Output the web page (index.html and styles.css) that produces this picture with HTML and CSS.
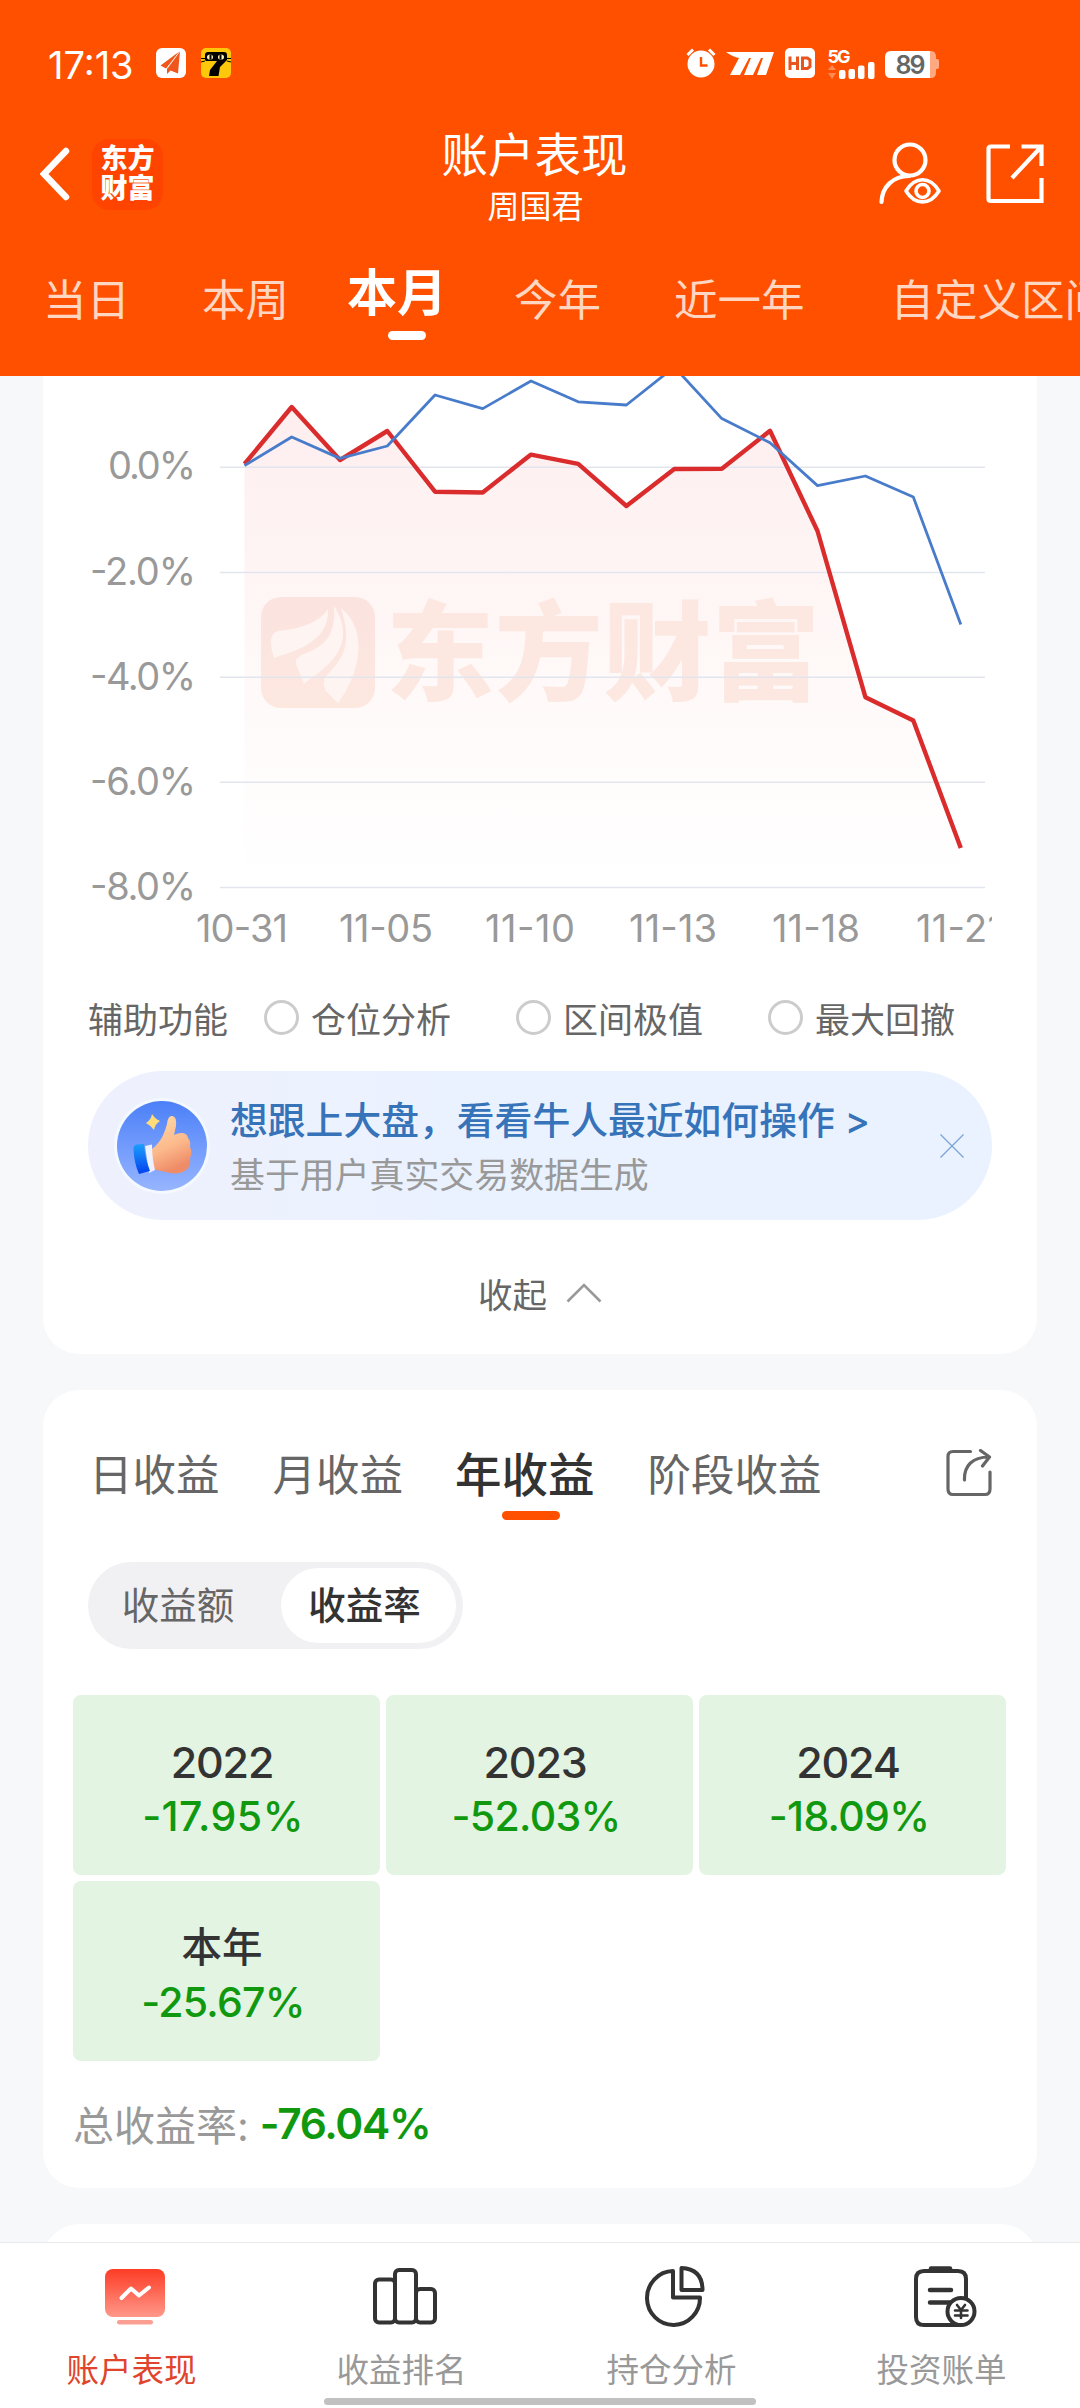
FILE: index.html
```html
<!DOCTYPE html>
<html lang="zh-CN">
<head>
<meta charset="utf-8">
<title>账户表现</title>
<link rel="stylesheet" href="styles.css">
</head>
<body>
<div class="app">
  <header class="header">
    <div class="status">
      <span class="time">17:13</span>
      <svg class="st-plane" width="30" height="30" viewBox="0 0 30 30"><rect width="30" height="30" rx="6" fill="#fff"/><path d="M24 3 4.500 17.500 10 20.500ZM24 3 11 20.500V26L14.500 22.500 22 25.500Z" fill="#f0561c"/><path d="M24 3 11 20.500" stroke="#fff" stroke-width=".8"/></svg>
      <svg class="st-cat" width="30" height="30" viewBox="0 0 30 30"><rect width="30" height="30" rx="5" fill="#fdc70c"/><path d="M4 12V7q0-3 3-3h16q3 0 3 3v5L19 19 17.500 28H8L9 22 16 13H5Z" fill="#000"/><path d="M0 10.500h4M0 14l4-1M30 10.500h-4M30 14l-4-1" stroke="#000"/><ellipse cx="9" cy="9" rx="3" ry="2.600" fill="#fff3b0"/><ellipse cx="20" cy="9" rx="3" ry="2.600" fill="#fff3b0"/><path d="M9.500 6.500v5M19.500 6.500v5" stroke="#000" stroke-width="2"/></svg>
      <span class="spacer"></span>
      <svg class="st-alarm" width="30" height="30" viewBox="0 0 30 30"><circle cx="15" cy="16" r="13.500" fill="#fff"/><path d="M1.500 7 7 1.500M28.500 7 23 1.500" stroke="#fff" stroke-width="3"/><path d="M15 9v8.500h6.500" fill="none" stroke="#ff5000" stroke-width="2.400"/></svg>
      <svg class="st-m" width="48" height="23" viewBox="0 0 48 23"><path d="M0 0H48L40 23H31L37 6H35L27 23H18L25 6H23L14 23H4L13 6Q7 5 0 0Z" fill="#fff"/></svg>
      <svg class="st-hd" width="30" height="30" viewBox="0 0 30 30"><rect width="30" height="30" rx="5" fill="#fff"/><path d="M5 8.500V22M12.500 8.500V22M5 15.500h7.500M17.500 10h5l2.500 2v6.500l-2.500 2h-5Z" fill="none" stroke="#e8551c" stroke-width="3"/></svg>
      <svg class="st-5g" width="48" height="31" viewBox="0 0 48 31"><text x="0.500" y="14.500" class="net" textLength="23">5G</text><path d="M1 22l4-5 4 5ZM1 25h8l-4 6Z" fill="#ff8a55"/><rect x="12" y="22" width="6.500" height="9" rx="2" fill="#fff"/><rect x="21.500" y="21" width="6.500" height="10" rx="2" fill="#fff"/><rect x="31" y="17.500" width="6.500" height="13.500" rx="2" fill="#fff"/><rect x="41" y="14" width="6.500" height="17" rx="2" fill="#fff"/></svg>
      <svg class="st-bat" width="54" height="27" viewBox="0 0 54 27"><path d="M42 0h4q5 0 5 6v2h1.500q1.500 0 1.500 2v6q0 2-1.500 2H51v3q0 6-5 6h-4Z" fill="#ffa983"/><path d="M6 0H45V27H6Q0 27 0 21V6Q0 0 6 0Z" fill="#fff"/><text x="10.500" y="22.500" class="bat" textLength="30">89</text></svg>
    </div>
    <div class="titlebar">
      <svg width="30" height="54" viewBox="0 0 30 54"><path d="M26 4 4 27 26 50" fill="none" stroke="#fff" stroke-width="6.500" stroke-linecap="round"/></svg>
      <div class="logo"><span>东方</span><span>财富</span></div>
      <div class="titles"><h1>账户表现</h1><p>周国君</p></div>
      <svg class="user" width="64" height="64" viewBox="0 0 64 64"><g fill="none" stroke="#fff" stroke-width="4.200" stroke-linecap="round"><circle cx="32" cy="18" r="15.500"/><path d="M3.500 60C4 45 15 34 31 34"/><path d="M28 49C37 34 52 34 61 49C52 63.500 37 63.500 28 49Z" stroke-width="3.600" stroke-linejoin="round"/><circle cx="44.500" cy="49" r="6.500" stroke-width="3.600"/></g></svg>
      <svg class="open" width="58" height="60" viewBox="0 0 58 60"><path d="M24 2.500H5q-2.500 0-2.500 2.500V54.500q0 2.500 2.500 2.500H55.500V34M55.500 22V2.500H35.500M55 3 26 34" fill="none" stroke="#fff" stroke-width="4.200"/></svg>
    </div>
    <nav class="ranges">
      <span>当日</span><span class="g2">本周</span><span class="on">本月<i></i></span><span class="g4">今年</span><span class="g5">近一年</span><span class="g6">自定义区间</span>
    </nav>
  </header>

  <main class="content">
    <section class="card chart-card">
      <svg class="chart" width="904" height="584" viewBox="88 376 904 584">
        <defs><linearGradient id="area" gradientUnits="userSpaceOnUse" x1="0" y1="400" x2="0" y2="880"><stop offset="0" stop-color="#f2454f" stop-opacity=".095"/><stop offset=".6" stop-color="#f75c4a" stop-opacity=".035"/><stop offset="1" stop-color="#f75c4a" stop-opacity="0"/></linearGradient>
        <linearGradient id="wm" x1="0" y1="0" x2="0" y2="1"><stop offset="0" stop-color="#fbe3df"/><stop offset="1" stop-color="#fde8e0"/></linearGradient></defs>
        <path d="M244.500 887V464L291.700 407 340 460 387.300 431 435 491.700 482.700 492.500 531 454.600 578.200 463.800 626.400 506 674.300 469 721.800 468.700 770 430.800 817.500 531 865.400 697.200 913.300 720.500 960.800 848V887Z" fill="url(#area)"/>
        <rect x="261" y="597" width="114" height="111" rx="20" fill="url(#wm)"/>
        <g fill="#fef5f3"><path d="M328 609C320 622 300 629 279 631Q271 632 271 642Q271 650 274 658C290 652 330 644 328 609Z"/><path d="M334 606C336 636 325 646 304 654Q294 658 296 664Q300 674 304 684C318 672 362 650 334 606Z"/><path d="M341 608C351 640 347 655 327 675Q321 682 326 691L338 703C356 680 372 634 341 608Z"/></g>
        <text x="386" y="692" class="watermark" textLength="434">东方财富</text>
        <path d="M220 467.200H985M220 572.400H985M220 677.300H985M220 782.200H985M220 887.400H985" stroke="#e2e5ee" stroke-width="1.500"/>
        <path d="M244.500 464 291.700 407 340 460 387.300 431 435 491.700 482.700 492.500 531 454.600 578.200 463.800 626.400 506 674.300 469 721.800 468.700 770 430.800 817.500 531 865.400 697.200 913.300 720.500 960.800 848" fill="none" stroke="#da2c2c" stroke-width="4.400" stroke-linejoin="round"/>
        <path d="M244.500 465.500 291.700 437 340 458.400 387.300 446 435 395 482.700 408.600 531 381 578.200 401.800 626.400 405 674.300 367 721.800 418.600 770 442.700 817.500 485.600 865.400 476 913.300 497 960.800 624.500" fill="none" stroke="#487ccb" stroke-width="2.800" stroke-linejoin="round"/>
        <g class="axis">
          <text x="108" y="479" textLength="88">0.0%</text><text x="90" y="585" textLength="106">-2.0%</text><text x="90" y="690" textLength="106">-4.0%</text><text x="90" y="795" textLength="106">-6.0%</text><text x="90" y="900" textLength="106">-8.0%</text>
          <text x="196" y="942" textLength="92">10-31</text><text x="339" y="942" textLength="94">11-05</text><text x="485" y="942" textLength="90">11-10</text><text x="629" y="942" textLength="88">11-13</text><text x="772" y="942" textLength="88">11-18</text><text x="916" y="942" textLength="87">11-21</text>
        </g>
      </svg>
      <div class="aux">
        <span class="aux-label">辅助功能</span>
        <label class="opt"><i></i>仓位分析</label><label class="opt o2"><i></i>区间极值</label><label class="opt o3"><i></i>最大回撤</label>
      </div>
      <div class="banner">
        <svg class="thumb" width="96" height="96" viewBox="0 0 96 96"><defs><linearGradient id="tb" x1="0" y1="0" x2="0" y2="1"><stop offset="0" stop-color="#4c80f8"/><stop offset="1" stop-color="#97b5ff"/></linearGradient><linearGradient id="hand" x1="0" y1="0" x2=".3" y2="1"><stop offset="0" stop-color="#ffd9a8"/><stop offset=".6" stop-color="#fcba8c"/><stop offset="1" stop-color="#ef8c68"/></linearGradient><linearGradient id="cuff" x1="0" y1="0" x2="0" y2="1"><stop offset="0" stop-color="#1ba0fb"/><stop offset="1" stop-color="#0340ee"/></linearGradient></defs><circle cx="48" cy="48" r="48" fill="#f4f8ff"/><circle cx="48" cy="48" r="45" fill="url(#tb)"/><path d="M38 51C46 45 50 37 53 26Q54 17 58.500 18Q63 19 62 28L60 37C66 34 73 34 74 40Q77 43 76 49Q79 55 76 60Q77 67 74 70Q69 77 56 75L38 71Z" fill="url(#hand)"/><path d="M31 48 38 46.500Q38 60 41 72L35 75Z" fill="#eef1ff"/><path d="M19.500 51Q19 47 23 46.500L30 46Q31 60 36 73L25 76Q20 65 19.500 51Z" fill="url(#cuff)"/><path d="M38 16Q41 21 46 23Q41 26 40 32Q36 27 32 25Q37 22 38 16Z" fill="#ffdc78"/></svg>
        <div class="banner-text"><strong>想跟上大盘，看看牛人最近如何操作 &gt;</strong><span>基于用户真实交易数据生成</span></div>
        <svg class="close" width="24" height="24" viewBox="0 0 24 24"><path d="M.5.5 23.500 23.500M23.500.5.5 23.500" stroke="#7ba3d5" stroke-width="1.300"/></svg>
      </div>
      <div class="fold">收起<svg width="36" height="20" viewBox="0 0 36 20"><path d="M1.500 18.500 18 2 34.500 18.500" fill="none" stroke="#999" stroke-width="2.600"/></svg></div>
    </section>

    <section class="card income">
      <div class="tabs"><span>日收益</span><span class="t2">月收益</span><span class="cur">年收益<i></i></span><span class="t4">阶段收益</span>
        <svg class="share" width="46" height="48" viewBox="0 0 46 48"><path d="M24.500 2.500H7Q2 2.500 2 7.500V40Q2 45.500 7 45.500H39Q44 45.500 44 40V23M18.500 31C18 17 26 8 43 8M34.500 1.500 43.500 8 36.500 17" fill="none" stroke="#666" stroke-width="3.200" stroke-linecap="round" stroke-linejoin="round"/></svg>
      </div>
      <div class="toggle"><span>收益额</span><span class="sel">收益率</span></div>
      <div class="years">
        <div class="tile"><b>2022</b><em class="wide">-17.95%</em></div>
        <div class="tile"><b>2023</b><em>-52.03%</em></div>
        <div class="tile"><b>2024</b><em>-18.09%</em></div>
        <div class="tile now"><b>本年</b><em>-25.67%</em></div>
      </div>
      <div class="total"><span>总收益率:</span><em>-76.04%</em></div>
    </section>
    <section class="card next"></section>
  </main>

  <footer class="bottom">
    <a class="active"><svg width="66" height="64" viewBox="0 0 66 64"><defs><linearGradient id="scr" x1="0" y1="0" x2="0" y2="1"><stop offset="0" stop-color="#fd3c25"/><stop offset="1" stop-color="#ff988a"/></linearGradient></defs><rect x="3" y="5" width="60" height="48" rx="8" fill="url(#scr)"/><path d="M19.500 34 29 24.500 37 31.500 47 23.500" fill="none" stroke="#fff" stroke-width="4" stroke-linecap="round" stroke-linejoin="round"/><rect x="15" y="56" width="36" height="4.500" rx="2.200" fill="#fa9f92"/></svg><span>账户表现</span></a>
    <a><svg width="66" height="64" viewBox="0 0 66 64"><g fill="none" stroke="#333" stroke-width="4"><rect x="3" y="15.500" width="20" height="43" rx="4"/><rect x="23" y="6" width="21" height="52.500" rx="4"/><rect x="44" y="25" width="19" height="33.500" rx="4"/></g></svg><span>收益排名</span></a>
    <a><svg width="66" height="64" viewBox="0 0 66 64"><g fill="none" stroke="#333" stroke-width="4" stroke-linejoin="round"><path d="M31 7A26.500 27 0 1 0 58 33.500H31Z"/><path d="M39.500 4V26H60.500Q60.500 5 39.500 4Z"/></g></svg><span>持仓分析</span></a>
    <a><svg width="70" height="64" viewBox="0 0 70 64"><g fill="none" stroke="#333" stroke-width="4" stroke-linecap="round"><path d="M56 34V15Q56 7 48 7H14Q6 7 6 15V53Q6 61 14 61H51"/><path d="M21 4.500H40" stroke-width="4.500"/><path d="M20 26H41M20 38.500H41" stroke-width="4.500"/><circle cx="51" cy="47.500" r="13.500" fill="#fff"/><path d="M47 41 51 46 55 41M51 46V54M45 46.500H57.500M45 51.500H57.500" stroke-width="2.600"/></g></svg><span>投资账单</span></a>
    <i class="home"></i>
  </footer>
</div>
</body>
</html>
```
FILE: styles.css
```css
* { box-sizing: border-box; }
body { margin: 0; background: #f7f8fa; font-family: Inter, "Noto Sans CJK SC", sans-serif; color: #333; }
h1, p { margin: 0; font-weight: 400; }
i, em { font-style: normal; }
svg { display: block; flex: none; }
.app { width: 1080px; height: 2408px; overflow: hidden; display: flex; flex-direction: column; }

/* Header */
.header { height: 376px; flex: none; background: #ff5000; color: #fff; overflow: hidden; }
.status { height: 110px; padding: 16px 141px 0 48px; display: flex; align-items: center; }
.time { width: 87px; font-size: 38px; letter-spacing: 0; line-height: 44px; margin-top: 4px; white-space: nowrap; }
.st-plane { margin-left: 21px; }
.st-cat { margin-left: 15px; }
.spacer { flex: 1; }
.st-m { margin-left: 10px; }
.st-hd { margin-left: 11px; }
.st-5g { margin-left: 12px; overflow: visible; }
.st-bat { margin-left: 10px; margin-top: 3px; }
.net { font-size: 18px; font-weight: 700; fill: #fff; }
.bat { font-size: 25px; font-weight: 600; fill: #666; }
.titlebar { height: 128px; padding: 0 36px 0 40px; display: flex; align-items: center; }
.logo { width: 71px; height: 71px; margin-left: 22px; border-radius: 17px; background: #ff4400; display: flex; flex-direction: column; align-items: center; justify-content: center; font-size: 27px; line-height: 30px; font-weight: 900; }
.titles { flex: 1; margin-left: 28px; padding-top: 6px; text-align: center; }
.titles h1 { font-size: 46.5px; line-height: 60px; }
.titles p { font-size: 32px; line-height: 44px; padding-left: 2px; }
.open { margin-left: 44px; }
.ranges { display: flex; align-items: flex-start; padding-left: 43px; white-space: nowrap; font-size: 43.5px; line-height: 60px; }
.ranges span { padding-top: 32px; color: #ffd6c2; flex: none; }
.ranges .g2 { margin-left: 72px; }
.ranges .on { margin-left: 58px; padding-top: 25px; font-size: 50px; font-weight: 600; color: #fff; display: flex; flex-direction: column; align-items: center; }
.on i { width: 38px; height: 9px; margin: 8px 0 0 20px; border-radius: 5px; background: #fff; }
.ranges .g4 { margin-left: 67px; }
.ranges .g5 { margin-left: 73px; }
.ranges .g6 { margin-left: 86px; }

/* Cards */
.content { flex: 1; min-height: 0; overflow: hidden; padding: 0 43px; display: flex; flex-direction: column; gap: 36px; }
.card { flex: none; background: #fff; border-radius: 36px; }
.chart-card { height: 978px; padding: 0 45px; border-radius: 0 0 36px 36px; }
.chart { overflow: hidden; }
.axis { font-size: 38px; fill: #999; font-weight: 400; }
.watermark { font-size: 108px; font-weight: 900; fill: #fce8e1; }
.aux { height: 70px; margin-top: 22px; display: flex; align-items: center; font-size: 35px; color: #666; white-space: nowrap; }
.opt { display: flex; align-items: center; margin-left: 36px; }
.opt i { width: 35px; height: 35px; margin-right: 12px; border: 3px solid #ccc; border-radius: 50%; }
.o2, .o3 { margin-left: 65px; }
.banner { height: 149px; margin-top: 19px; padding: 0 28px 0 26px; border-radius: 75px; background: linear-gradient(90deg, #eef1fd, #eaf2ff 50%); display: flex; align-items: center; }
.banner-text { flex: 1; margin-left: 20px; padding-top: 5px; display: flex; flex-direction: column; white-space: nowrap; }
.banner-text strong { font-size: 37.8px; line-height: 55px; font-weight: 500; color: #3673b9; }
.banner-text span { font-size: 34.900px; line-height: 55px; color: #999; }
.fold { height: 60px; margin-top: 43px; display: flex; align-items: center; justify-content: center; gap: 19px; font-size: 34.5px; color: #666; }

.income { height: 798px; padding: 0 31px 0 30px; }
.tabs { height: 172px; padding: 55px 14px 0 16px; display: flex; align-items: flex-start; font-size: 43.5px; line-height: 60px; color: #666; white-space: nowrap; }
.t2 { margin-left: 53px; }
.cur { margin-left: 52px; font-size: 46.5px; font-weight: 500; color: #333; display: flex; flex-direction: column; align-items: center; }
.cur i { width: 58px; height: 9px; margin: 6px 0 0 12px; border-radius: 5px; background: #ff5000; }
.t4 { margin-left: 53px; }
.share { margin: 4px 0 0 auto; }
.toggle { width: 375px; height: 87px; margin-left: 15px; padding: 6px 7px; border-radius: 44px; background: #f1f1f4; display: flex; font-size: 37.5px; line-height: 75px; color: #666; text-align: center; }
.toggle span { width: 186px; padding-right: 20px; }
.toggle .sel { width: 175px; padding: 0 8px 0 0; border-radius: 38px; background: #fff; color: #333; font-weight: 500; }
.years { margin-top: 46px; display: grid; grid-template-columns: repeat(3, 1fr); grid-auto-rows: 180px; gap: 6px; }
.tile { border-radius: 8px; background: #e3f4e3; display: flex; flex-direction: column; align-items: center; padding: 40px 9px 0 0; }
.tile b { font-size: 43px; line-height: 54px; font-weight: 500; letter-spacing: -1.2px; }
.tile em { font-size: 41px; line-height: 54px; font-weight: 500; color: #10980f; letter-spacing: -.7px; padding-left: 2px; }
.tile .wide { letter-spacing: .5px; }
.tile.now b { font-size: 40.500px; letter-spacing: 0; }
.total { height: 124px; display: flex; align-items: center; gap: 11px; font-size: 41px; color: #999; }
.total em { font-size: 42.5px; font-weight: 600; color: #10980f; letter-spacing: -1.3px; }
.next { height: 100px; }

/* Bottom navigation */
.bottom { position: relative; height: 166px; flex: none; border-top: 1px solid #e9eaec; background: #fff; display: grid; grid-template-columns: repeat(4, 1fr); }
.bottom a { display: flex; flex-direction: column; align-items: center; padding-top: 21px; font-size: 32.5px; line-height: 44px; color: #999; }
.bottom a span { margin: 21px 7px 0 0; }
.bottom .active { color: #e0442c; }
.home { position: absolute; left: 324px; bottom: 3px; width: 432px; height: 7px; border-radius: 4px; background: #c1c1c1; }
```
